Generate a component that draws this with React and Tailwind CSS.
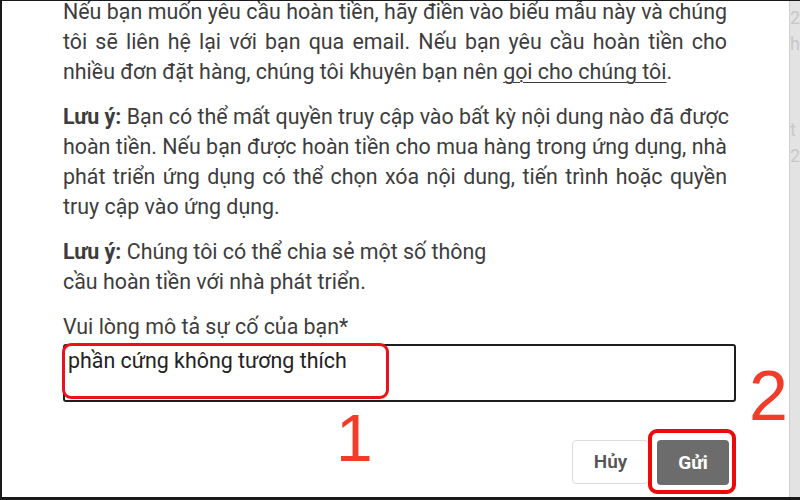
import React from "react";

function J({ children }) {
  return <div className="text-justify [text-align-last:justify] whitespace-nowrap">{children}</div>;
}

export default function App() {
  const font = { fontFamily: "Roboto, 'Noto Sans', sans-serif" };
  return (
    <div
      className="relative w-[800px] h-[500px] overflow-hidden bg-white flex border-l-2 border-t border-b-[3px] border-[#1a1a1a]"
      style={font}
    >
      <div className="flex-1 bg-white pl-[61px] pr-[60px] pt-0 text-[#3d3d3d] text-[21.4px] leading-[30px]">
        <div className="w-[664px] mt-[-4px] flex flex-col gap-[15px]">
          <div>
            <J>Nếu bạn muốn yêu cầu hoàn tiền, hãy điền vào biểu mẫu này và chúng</J>
            <J>tôi sẽ liên hệ lại với bạn qua email. Nếu bạn yêu cầu hoàn tiền cho</J>
            <div className="whitespace-nowrap">
              nhiều đơn đặt hàng, chúng tôi khuyên bạn nên{" "}
              <span className="underline underline-offset-[3px] decoration-1">gọi cho chúng tôi</span>.
            </div>
          </div>
          <div>
            <J>
              <span className="font-bold">Lưu ý:</span> Bạn có thể mất quyền truy cập vào bất kỳ nội dung nào đã được
            </J>
            <J>hoàn tiền. Nếu bạn được hoàn tiền cho mua hàng trong ứng dụng, nhà</J>
            <J>phát triển ứng dụng có thể chọn xóa nội dung, tiến trình hoặc quyền</J>
            <div className="whitespace-nowrap">truy cập vào ứng dụng.</div>
          </div>
          <div className="whitespace-nowrap">
            <div>
              <span className="font-bold">Lưu ý:</span> Chúng tôi có thể chia sẻ một số thông
            </div>
            <div>cầu hoàn tiền với nhà phát triển.</div>
          </div>
          <div>
            <p>Vui lòng mô tả sự cố của bạn*</p>
            <div className="mt-[2px] w-[673px] h-[58px] border-2 border-[#1e1e1e] rounded-[3px] pl-[3px] pt-0 text-[#222]">
              phần cứng không tương thích
            </div>
          </div>
        </div>
        <div className="w-[666px] flex justify-end gap-[8px] mt-[38px]">
          <button className="w-[77px] h-[44px] rounded-[4px] border border-[#dcdcdc] bg-white text-[#555] text-[19px] font-semibold">
            Hủy
          </button>
          <button className="w-[72px] h-[45px] rounded-[4px] bg-[#6c6c6c] text-white text-[19px] font-bold">
            Gửi
          </button>
        </div>
      </div>
      <div className="w-[12px] bg-[#e3e3e3] border-l border-[#d0d0d0] text-[#c8c8c8] text-[18px] leading-[26px] overflow-hidden">
        <div className="pt-[4px]">2</div>
        <div>h</div>
        <div className="mt-[60px]">t</div>
        <div>2</div>
      </div>

      {/* annotations */}
      <div className="absolute left-[60px] top-[342px] w-[327px] h-[56px] border-[3px] border-[#e8141a] rounded-[9px]" />
      <div className="absolute left-[646px] top-[428px] w-[88px] h-[65px] border-[4px] border-[#ee0a0a] rounded-[9px]" />
      <div
        className="absolute left-[334px] top-[404px] text-[#f23c2a] text-[66px] leading-none"
        style={{ fontFamily: "'Liberation Sans', Arial, sans-serif" }}
      >
        1
      </div>
      <div
        className="absolute left-[747px] top-[360px] text-[#f23c2a] text-[70px] leading-none"
        style={{ fontFamily: "'Liberation Sans', Arial, sans-serif" }}
      >
        2
      </div>
    </div>
  );
}
